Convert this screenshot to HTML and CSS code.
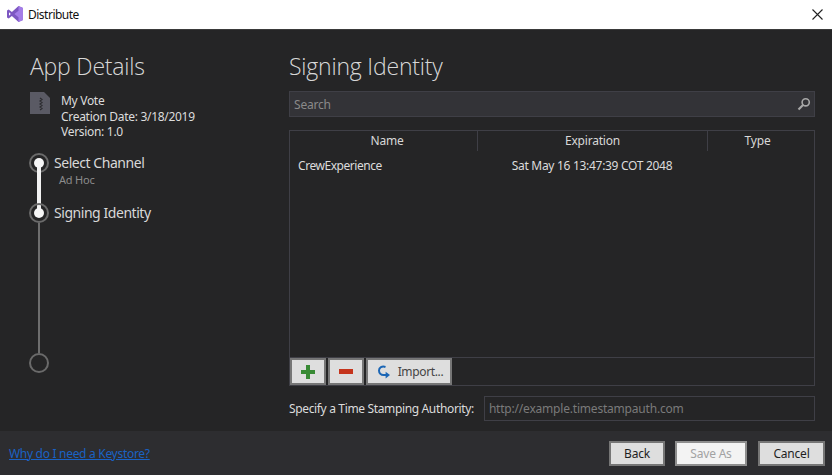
FILE: index.html
```html
<!DOCTYPE html>
<html lang="en">
<head>
  <meta charset="UTF-8">
  <title>Distribute</title>
  <link rel="stylesheet" href="styles.css">
</head>
<body>
  <header class="titlebar">
    <svg class="vs-logo" width="16" height="16" viewBox="0 0 16 16">
      <path d="M11.5 0 16 2V14L11.5 16 4.9 10 1.7 12.4 0 11.5V4.5L1.7 3.6 4.9 6ZM2 6.3V9.7L3.8 8Z" fill="#7d57c2"/>
      <path d="M11.5 0 16 2V14L11.5 16ZM11.5 4.8 7.4 8 11.5 11.2Z" fill="#a47de8" fill-rule="evenodd"/>
    </svg>
    <span class="titlebar-text">Distribute</span>
    <svg class="close-icon" width="11" height="11" viewBox="0 0 11 11">
      <path d="M.5 .5 10.5 10.5M10.5 .5 .5 10.5" stroke="#222" stroke-width="1.1" fill="none"/>
    </svg>
  </header>

  <main class="content">
    <aside class="sidebar">
      <h1 class="heading">App Details</h1>
      <div class="app-info">
        <svg class="zip-icon" width="20" height="22" viewBox="0 0 20 22">
          <path d="M0 0H14L20 6V22H0Z" fill="#5a5a64"/>
          <path d="M10 6 12 7.5 10 9 12 10.5 10 12 12 13.5 10 15 12 16.5 10 18" stroke="#2c2c30" stroke-width="1.2" fill="none"/>
        </svg>
        <div class="app-text">
          <div>My Vote</div>
          <div>Creation Date: 3/18/2019</div>
          <div>Version: 1.0</div>
        </div>
      </div>
      <ol class="steps">
        <li class="step step-done">
          <span class="ring"><span class="ring-dot"></span></span>
          <div class="step-text">
            <div class="step-name">Select Channel</div>
            <div class="step-sub">Ad Hoc</div>
          </div>
        </li>
        <li class="step step-current">
          <span class="ring"><span class="ring-dot"></span></span>
          <div class="step-text">
            <div class="step-name">Signing Identity</div>
          </div>
        </li>
        <li class="step step-last">
          <span class="ring"></span>
        </li>
      </ol>
    </aside>

    <section class="panel">
      <h1 class="heading">Signing Identity</h1>
      <div class="search">
        <span>Search</span>
        <svg width="14" height="14" viewBox="0 0 14 14">
          <circle cx="8.7" cy="5.3" r="3.6" stroke="#a8a8a8" stroke-width="1.6" fill="none"/>
          <path d="M6 8 1.5 12.5" stroke="#a8a8a8" stroke-width="2.2"/>
        </svg>
      </div>

      <div class="list">
        <div class="list-head">
          <div class="head-name">Name</div>
          <div>Expiration</div>
          <div class="head-type">Type</div>
        </div>
        <div class="list-row">
          <div class="cell-name">CrewExperience</div>
          <div class="cell-exp">Sat May 16 13:47:39 COT 2048</div>
          <div></div>
        </div>
        <div class="list-tools">
          <button class="btn tool-btn">
            <svg width="14" height="14" viewBox="0 0 14 14"><path d="M5 0H9V5H14V9H9V14H5V9H0V5H5Z" fill="#388a34"/></svg>
          </button>
          <button class="btn tool-btn">
            <svg width="14" height="5" viewBox="0 0 14 5"><path d="M0 0H14V5H0Z" fill="#c5341c"/></svg>
          </button>
          <button class="btn import-btn">
            <svg width="14" height="14" viewBox="0 0 14 14">
              <path d="M8.5 2C5 .8 2 2.6 2 5.6c0 2.6 2 4.4 4.5 4.4h3.5" stroke="#1b66b5" stroke-width="2" fill="none"/>
              <path d="M8.6 6.8 13 10 8.6 13.4Z" fill="#1b66b5"/>
            </svg>
            <span>Import...</span>
          </button>
        </div>
      </div>

      <div class="tsa">
        <label class="tsa-label">Specify a Time Stamping Authority:</label>
        <div class="tsa-input">http://example.timestampauth.com</div>
      </div>
    </section>
  </main>

  <footer class="footer">
    <a class="help-link" href="#">Why do I need a Keystore?</a>
    <div class="footer-btns">
      <button class="btn foot-btn back-btn">Back</button>
      <button class="btn foot-btn save-btn">Save As</button>
      <button class="btn foot-btn cancel-btn">Cancel</button>
    </div>
  </footer>
</body>
</html>
```

FILE: styles.css
```css
* {
  box-sizing: border-box;
}

body {
  margin: 0;
  width: 832px;
  height: 475px;
  overflow: hidden;
  display: flex;
  flex-direction: column;
  font-family: "Noto Sans", "Open Sans", sans-serif;
  font-size: 12px;
  background-color: #252526;
  color: #e0e0e0;
}

/* title bar */
.titlebar {
  height: 30px;
  flex: none;
  display: flex;
  align-items: center;
  padding: 0 9px 1px 7px;
  background-color: #fff;
  border-bottom: 1px solid #3a3a3a;
  color: #111;
}

.titlebar-text {
  margin-left: 5px;
  font-size: 12px;
  letter-spacing: -0.5px;
}

.close-icon {
  margin-left: auto;
}

/* main area */
.content {
  flex: 1;
  display: flex;
  min-height: 0;
}

.sidebar {
  width: 289px;
  flex: none;
  padding: 20px 0 0 30px;
}

.panel {
  width: 526px;
  flex: none;
  padding-top: 20px;
  display: flex;
  flex-direction: column;
}

.heading {
  margin: 0;
  font-family: "Open Sans", sans-serif;
  font-size: 23px;
  line-height: 32px;
  font-weight: 300;
  color: #d8d8d8;
  letter-spacing: -0.2px;
}

.app-info {
  display: flex;
  margin-top: 10px;
}

.zip-icon {
  flex: none;
}

.app-text {
  margin-left: 11px;
  padding-top: 1px;
  line-height: 15.5px;
  letter-spacing: -0.3px;
  color: #dcdcdc;
}

/* stepper */
.steps {
  list-style: none;
  margin: 13px 0 0 -1px;
  padding: 0;
}

.step {
  position: relative;
  display: flex;
  height: 50px;
}

.step-current {
  height: 150px;
}

.step::after {
  content: "";
  position: absolute;
  top: 10px;
  left: 8px;
  width: 4px;
  height: 50px;
  background-color: #f2f2f2;
}

.step-current::after {
  left: 9px;
  width: 2px;
  height: 130px;
  top: 20px;
  background-color: #6e6e6e;
}

.step-last::after {
  display: none;
}

.ring {
  flex: none;
  width: 20px;
  height: 20px;
  border: 2px solid #6a6a6a;
  border-radius: 50%;
  display: flex;
  align-items: center;
  justify-content: center;
}

.ring-dot {
  position: relative;
  z-index: 1;
  width: 10px;
  height: 10px;
  border-radius: 50%;
  background-color: #f6f6f6;
}

.step-text {
  margin-left: 5px;
}

.step-name {
  font-size: 14px;
  line-height: 20px;
  letter-spacing: -0.45px;
  color: #d8d8d8;
}

.step-sub {
  margin: 0 0 0 5px;
  font-size: 11px;
  line-height: 14px;
  letter-spacing: -0.2px;
  color: #8c8c8c;
}

/* search box */
.search {
  height: 26px;
  margin-top: 9px;
  display: flex;
  align-items: center;
  justify-content: space-between;
  padding: 0 3px 0 4px;
  background-color: #333337;
  border: 1px solid #3f3f46;
  color: #8a8a8a;
  letter-spacing: -0.2px;
}

/* identity list */
.list {
  height: 256px;
  margin-top: 13px;
  display: flex;
  flex-direction: column;
  border: 1px solid #3f3f46;
}

.list-head,
.list-row {
  display: grid;
  grid-template-columns: 187px 230px 1fr;
}

.list-head {
  height: 20px;
  line-height: 20px;
  text-align: center;
  letter-spacing: -0.2px;
  color: #d8d8d8;
}

.list-head div + div {
  border-left: 1px solid #3f3f46;
}

.head-name {
  padding-left: 7px;
}

.head-type {
  padding-right: 7px;
}

.list-row {
  height: 30px;
  line-height: 30px;
  color: #dcdcdc;
}

.cell-name {
  padding-left: 8px;
  letter-spacing: -0.45px;
}

.cell-exp {
  text-align: center;
  letter-spacing: -0.3px;
}

.list-tools {
  margin-top: auto;
  height: 28px;
  display: flex;
  gap: 2px;
  border-top: 1px solid #3f3f46;
}

.btn {
  font-family: inherit;
  font-size: 12px;
  letter-spacing: -0.2px;
  padding: 0;
  background-color: #dedede;
  border: 2px solid #767676;
  color: #1e1e1e;
}

.tool-btn {
  width: 36px;
  display: flex;
  align-items: center;
  justify-content: center;
}

.import-btn {
  width: 86px;
  display: flex;
  align-items: center;
  justify-content: center;
  gap: 7px;
  padding-left: 2px;
  color: #444;
  letter-spacing: -0.35px;
}

/* time stamp row */
.tsa {
  height: 25px;
  margin-top: 10px;
  display: flex;
  align-items: center;
  gap: 10px;
}

.tsa-label {
  letter-spacing: -0.35px;
  color: #dcdcdc;
  white-space: nowrap;
}

.tsa-input {
  flex: 1;
  height: 25px;
  line-height: 23px;
  padding-left: 4px;
  border: 1px solid #3f3f46;
  color: #7a7a7a;
  letter-spacing: -0.2px;
}

/* footer */
.footer {
  height: 44px;
  flex: none;
  display: flex;
  align-items: center;
  justify-content: space-between;
  padding: 1px 7px 0 9px;
  background-color: #2d2d30;
}

.help-link {
  color: #1a62c4;
  letter-spacing: -0.3px;
}

.footer-btns {
  display: flex;
}

.foot-btn {
  height: 25px;
}

.back-btn {
  width: 56px;
}

.save-btn {
  width: 72px;
  margin-left: 10px;
  background-color: #f3f3f3;
  border-color: #8e8e8e;
  color: #a2a2a2;
}

.cancel-btn {
  width: 67px;
  margin-left: 11px;
}
```
